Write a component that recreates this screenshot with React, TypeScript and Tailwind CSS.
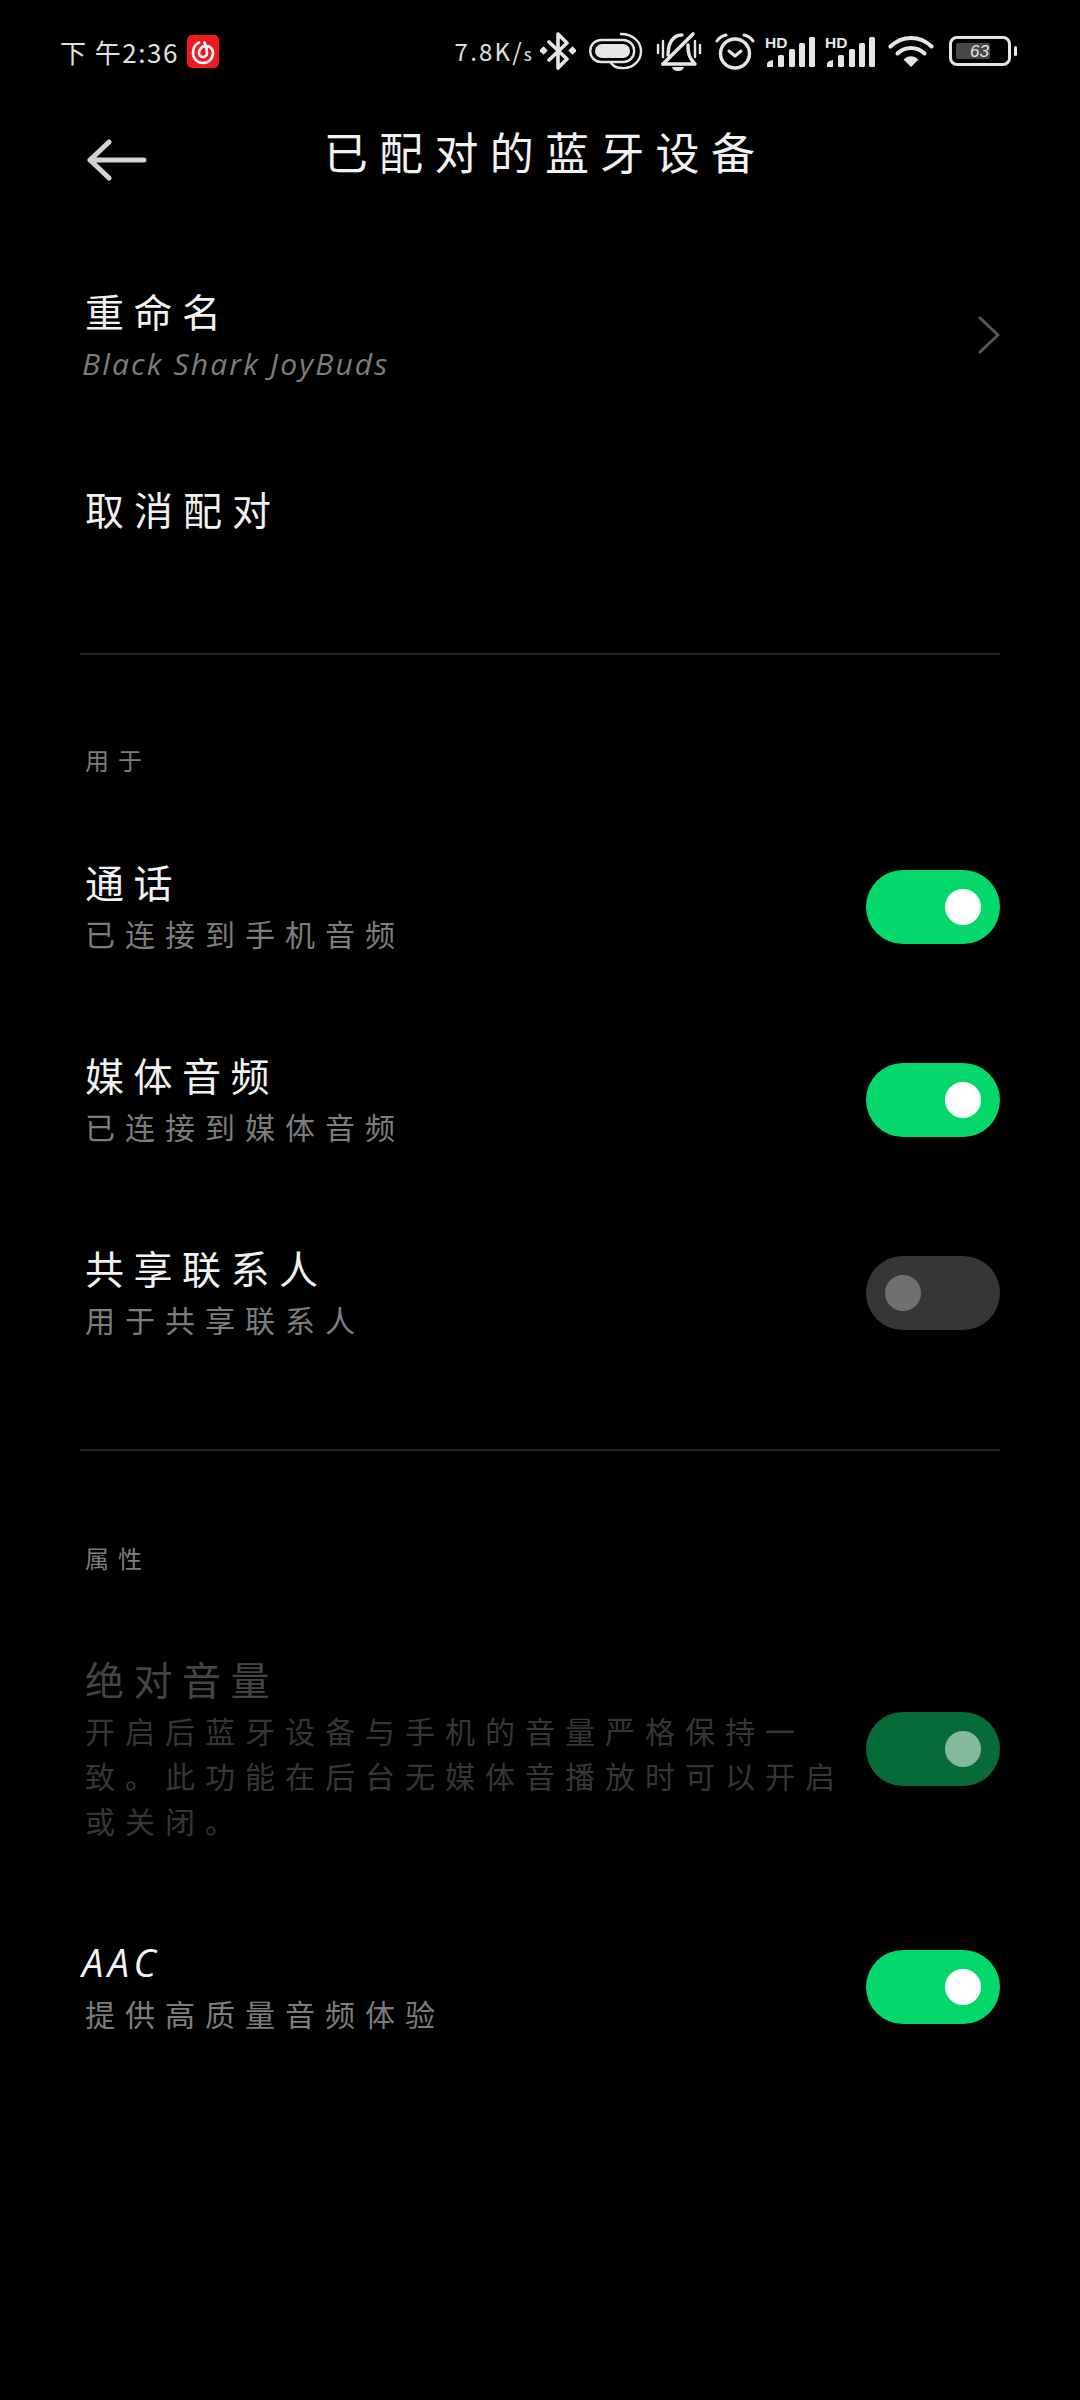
import React from "react";

type ToggleState = "on" | "off" | "disabled";

function Toggle({ state }: { state: ToggleState }) {
  if (state === "off") {
    return (
      <div className="flex h-[74px] w-[134px] shrink-0 items-center justify-start rounded-full bg-[#363636] pl-[19px]">
        <div className="h-[36px] w-[36px] rounded-full bg-[#707070]" />
      </div>
    );
  }
  if (state === "disabled") {
    return (
      <div className="flex h-[74px] w-[134px] shrink-0 items-center justify-end rounded-full bg-[#066b36] pr-[19px]">
        <div className="h-[36px] w-[36px] rounded-full bg-[#84b99e]" />
      </div>
    );
  }
  return (
    <div className="flex h-[74px] w-[134px] shrink-0 items-center justify-end rounded-full bg-[#05d86b] pr-[19px]">
      <div className="h-[36px] w-[36px] rounded-full bg-white" />
    </div>
  );
}

function SettingRow({
  title,
  subtitle,
  state,
  muted = false,
  latinTitle = false,
}: {
  title: string;
  subtitle: string;
  state: ToggleState;
  muted?: boolean;
  latinTitle?: boolean;
}) {
  let titleClass = "-translate-y-[3px] text-[39px] leading-[57px] tracking-[9.5px] text-[#f2f2f2]";
  if (muted) titleClass = "-translate-y-[3px] text-[39px] leading-[57px] tracking-[9.5px] text-[#454545]";
  if (latinTitle) titleClass = "-ml-[3px] -translate-y-[2px] text-[38px] italic leading-[57px] tracking-[4.5px] text-[#f2f2f2] font-['Open_Sans']";
  return (
    <div className="flex items-center justify-between pl-[85px] pr-[80px]">
      <div className="w-[770px]">
        <div className={titleClass}>{title}</div>
        <div
          className={
            muted
              ? "-translate-y-[2px] text-[30px] leading-[45px] tracking-[10px] text-[#363636]"
              : "-translate-y-[2px] text-[30px] leading-[45px] tracking-[10px] text-[#7d7d7d]"
          }
        >
          {subtitle}
        </div>
      </div>
      <Toggle state={state} />
    </div>
  );
}

function NeteaseLogo() {
  return (
    <svg width="32" height="33" viewBox="0 0 32 33" className="ml-[8px]">
      <rect width="32" height="33" rx="5" fill="#f0191f" />
      <path
        d="M12 7.5C8 9.5 6 13.5 6 18a10 10 0 0 0 20 0c0-4-3-7-7-7-4 0-7 3-7 7a4 4 0 0 0 8 0c0-3-1-7-2.500-10.500"
        fill="none"
        stroke="#fff"
        strokeWidth="2.6"
        strokeLinecap="round"
      />
    </svg>
  );
}

function BluetoothIcon() {
  return (
    <svg width="36" height="38" viewBox="0 0 36 38" className="ml-[6px]">
      <path
        d="M9 10 27 27 18 36V2L27 11 9 28"
        fill="none"
        stroke="#e6e6e6"
        strokeWidth="3.600"
        strokeLinejoin="round"
        strokeLinecap="round"
      />
      <rect x="0.5" y="15.5" width="6" height="6" transform="rotate(45 3.5 18.5)" fill="#e6e6e6" />
      <rect x="29.5" y="15.5" width="6" height="6" transform="rotate(45 32.5 18.5)" fill="#e6e6e6" />
    </svg>
  );
}

function EarbudsIcon() {
  return (
    <svg width="54" height="38" viewBox="0 0 54 38" className="ml-[13px]">
      <rect x="1.200" y="8" width="44" height="22" rx="11" fill="none" stroke="#e6e6e6" strokeWidth="2.400" />
      <rect x="6" y="12" width="35" height="14" rx="7" fill="#e6e6e6" />
      <path
        d="M32 2C45 2 52 11 52 19 52 30 42 37 33 36 28 36 24 34 22 31"
        fill="none"
        stroke="#e6e6e6"
        strokeWidth="2.400"
        strokeLinecap="round"
      />
    </svg>
  );
}

function MutedBellIcon() {
  return (
    <svg width="46" height="40" viewBox="0 0 46 40" className="ml-[13px]">
      <g fill="none" stroke="#e6e6e6" strokeLinecap="round">
        <path d="M2 14V22M7 10V26M39 10V26M44 14V22" strokeWidth="2.400" />
        <path d="M7 33 37 3" strokeWidth="3.600" />
        <path d="M12 24C12 12 17 4 26 4" strokeWidth="3.400" />
        <path d="M32 14C32 24 34 28 39 33H7" strokeWidth="3.400" strokeLinejoin="round" />
      </g>
      <path d="M16 36H28C27 39 25 40 22 40 19 40 17 39 16 36Z" fill="#e6e6e6" />
    </svg>
  );
}

function AlarmIcon() {
  return (
    <svg width="40" height="37" viewBox="0 0 40 37" className="ml-[13px]">
      <g fill="none" stroke="#e6e6e6" strokeLinecap="round">
        <circle cx="20" cy="20.500" r="14.500" strokeWidth="3.400" />
        <path d="M2 8C4 5 7 3 11 2M29 2C33 3 36 5 38 8" strokeWidth="3" />
        <path d="M14 18 20 23 26 18" strokeWidth="3" strokeLinejoin="round" />
      </g>
    </svg>
  );
}

function SignalIcon({ className }: { className: string }) {
  return (
    <svg width="50" height="36" viewBox="0 -4 50 36" className={className}>
      <text x="0" y="11.500" fontFamily="Liberation Sans" fontWeight="700" fontSize="15.500" fill="#e6e6e6">
        HD
      </text>
      <g fill="#e6e6e6">
        <path d="M2 31V28Q2 25 8 24V31Z" />
        <rect x="13" y="19" width="6" height="12" rx="1.500" />
        <rect x="24" y="13" width="6" height="18" rx="1.500" />
        <rect x="34" y="7" width="6" height="24" rx="1.500" />
        <rect x="44" y="1" width="6" height="30" rx="1.500" />
      </g>
    </svg>
  );
}

function WifiIcon() {
  return (
    <svg width="46" height="34" viewBox="0 0 46 34" className="ml-[13px]">
      <g fill="none" stroke="#e6e6e6" strokeWidth="4" strokeLinecap="round">
        <path d="M2.500 12.500C14 1 32 1 43.500 12.500" />
        <path d="M9.500 19.500C17 12 29 12 36.500 19.500" />
      </g>
      <path d="M15.500 25.500C20 21 26 21 30.500 25.500L23 33Z" fill="#e6e6e6" />
    </svg>
  );
}

function Battery() {
  return (
    <div className="ml-[15px] flex items-center">
      <div className="flex h-[30px] w-[62px] items-center rounded-[8px] border-[3px] border-[#e6e6e6] px-[4px]">
        <div className="flex h-[16px] w-[34px] items-center justify-end rounded-[2px] bg-[#474747] pr-[1px] text-[17px] italic leading-none text-[#e6e6e6] font-['Liberation_Sans']">
          63
        </div>
      </div>
      <div className="ml-[3px] h-[10px] w-[3px] rounded-full bg-[#e6e6e6]" />
    </div>
  );
}

function StatusBar() {
  return (
    <div className="flex h-[104px] items-center justify-between pb-[2px] pl-[60px] pr-[63px]">
      <div className="flex items-center">
        <span className="text-[26px] tracking-[1.500px] text-[#e0e0e0]">下 午2:36</span>
        <NeteaseLogo />
      </div>
      <div className="flex items-center">
        <span className="text-[24px] tracking-[2.200px] text-[#e0e0e0]">
          7.8K/<span className="text-[17px]">s</span>
        </span>
        <BluetoothIcon />
        <EarbudsIcon />
        <MutedBellIcon />
        <AlarmIcon />
        <SignalIcon className="-mt-[2px] ml-[10px]" />
        <SignalIcon className="-mt-[2px] ml-[10px]" />
        <WifiIcon />
        <Battery />
      </div>
    </div>
  );
}

export default function App() {
  return (
    <div className="h-[2400px] w-[1080px] overflow-hidden bg-black font-['Noto_Sans_CJK_SC','Noto_Sans',sans-serif]">
      <StatusBar />

      <div className="relative flex h-[110px] items-center justify-center">
        <svg width="60" height="42" viewBox="0 0 60 42" className="absolute left-[87px] top-[35px]">
          <path
            d="M3 21H57M22 3 3 21 22 39"
            fill="none"
            stroke="#d4d4d4"
            strokeWidth="5"
            strokeLinecap="round"
            strokeLinejoin="round"
          />
        </svg>
        <h1 className="pb-[17px] pl-[10px] text-[44px] leading-[60px] tracking-[11.300px] text-[#f2f2f2]">
          已配对的蓝牙设备
        </h1>
      </div>

      <div className="flex items-center justify-between pl-[85px] pr-[80px] pt-[70px]">
        <div>
          <div className="-translate-y-[2px] text-[39px] leading-[57px] tracking-[9.500px] text-[#f2f2f2]">重命名</div>
          <div className="-ml-[3px] text-[30px] italic leading-[45px] tracking-[2.150px] text-[#7d7d7d] font-['Open_Sans']">
            Black Shark JoyBuds
          </div>
        </div>
        <svg width="22" height="38" viewBox="0 0 22 38">
          <path d="M2 2 20 19 2 36" fill="none" stroke="#575757" strokeWidth="3" strokeLinecap="round" strokeLinejoin="round" />
        </svg>
      </div>

      <div className="-translate-y-[2px] pl-[85px] pt-[96px] text-[39px] leading-[57px] tracking-[10px] text-[#f2f2f2]">取消配对</div>

      <div className="mx-[80px] mt-[114px] h-[2px] bg-[#262626]" />

      <div className="-translate-y-[1px] pl-[85px] pt-[86px] text-[24px] leading-[40px] tracking-[9px] text-[#7d7d7d]">用于</div>

      <div className="flex flex-col gap-[91px] pt-[75px]">
        <SettingRow title="通话" subtitle="已连接到手机音频" state="on" />
        <SettingRow title="媒体音频" subtitle="已连接到媒体音频" state="on" />
        <SettingRow title="共享联系人" subtitle="用于共享联系人" state="off" />
      </div>

      <div className="mx-[80px] mt-[105px] h-[2px] bg-[#262626]" />

      <div className="-translate-y-[1px] pl-[85px] pt-[88px] text-[24px] leading-[40px] tracking-[9px] text-[#7d7d7d]">属性</div>

      <div className="flex flex-col gap-[91px] pt-[74px]">
        <SettingRow
          title="绝对音量"
          subtitle="开启后蓝牙设备与手机的音量严格保持一致。此功能在后台无媒体音播放时可以开启或关闭。"
          state="disabled"
          muted
        />
        <SettingRow title="AAC" subtitle="提供高质量音频体验" state="on" latinTitle />
      </div>
    </div>
  );
}
